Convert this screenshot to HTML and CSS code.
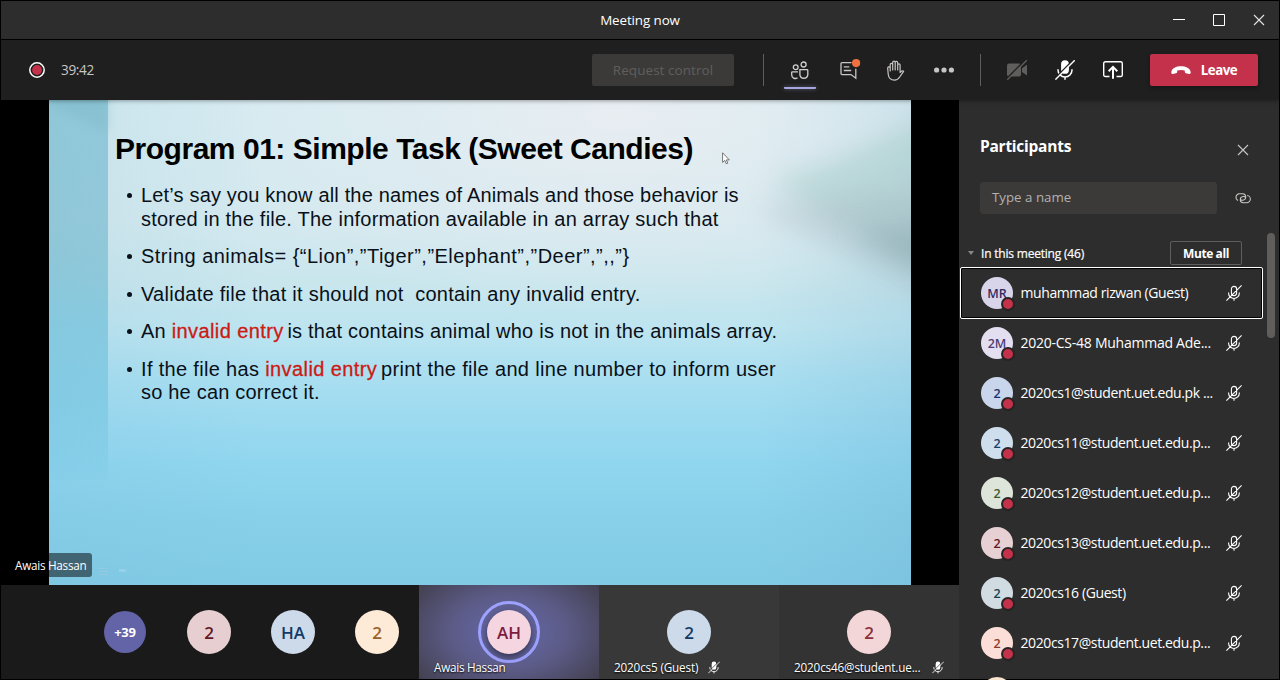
FILE: index.html
```html
<!DOCTYPE html>
<html lang="en">
<head>
<meta charset="utf-8">
<title>Meeting now</title>
<link rel="stylesheet" href="styles.css">
</head>
<body>
<svg class="defs" width="0" height="0" aria-hidden="true">
  <symbol id="mic-off" viewBox="0 0 16 16">
    <path d="M5.400 4a2.600 2.600 0 0 1 5.200 0v4a2.600 2.600 0 0 1-5.200 0zM2.600 7.600v.6a5.300 5.300 0 0 0 10.700 0v-.6M8 13.600v2.200M.4 15.600L15.600.4" fill="none" stroke="currentColor" stroke-width="1.1"/>
  </symbol>
  <symbol id="mic-solid" viewBox="0 0 20 20">
    <path d="M6.100 4.100a3.900 3.900 0 0 1 7.800 0v5.800a3.900 3.900 0 0 1-7.800 0z" fill="currentColor"/>
    <path d="M3 9.200v.8a7 7 0 0 0 14 0v-.8M10 17v2.800" fill="none" stroke="currentColor" stroke-width="1.5"/>
    <path d="M-.4 18.600L18.600-.4" stroke="var(--cut)" stroke-width="1.5"/>
    <path d="M.4 19.600L19.800.2" stroke="currentColor" stroke-width="1.4"/>
  </symbol>
</svg>
<div class="window">
  <header class="titlebar">
    <span class="title">Meeting now</span>
    <div class="controls">
      <svg width="12" height="12"><path d="M0 5.500h12" stroke="#fff"/></svg>
      <svg width="12" height="12"><path d="M.5.5h11v11H.5z" fill="none" stroke="#fff"/></svg>
      <svg width="12" height="12"><path d="M1 1l10 10M11 1L1 11" stroke="#e4e4e4" stroke-width="1.1"/></svg>
    </div>
  </header>
  <nav class="toolbar">
    <svg class="rec" width="16" height="16"><circle cx="8" cy="8" r="7.2" fill="none" stroke="#fff" stroke-width="1.5"/><circle cx="8" cy="8" r="4.9" fill="#c4314b"/></svg>
    <span class="timer">39:42</span>
    <button class="request">Request control</button>
    <i class="divider"></i>
    <span class="tool people active"><svg width="18" height="19" viewBox="0 0 18 19" fill="none" stroke="#d2d0ce" stroke-width="1.3"><circle cx="4.700" cy="6.200" r="2.4"/><circle cx="12.600" cy="3.500" r="2.5"/><path d="M8.900 8.600h7.200c.4 0 .7.3.7.7v4.600a4 4 0 0 1-7.900 0zM6.900 10.800H1.400c-.4 0-.7.3-.7.7v2.200a3.600 3.600 0 0 0 5.800 3"/></svg></span>
    <span class="tool chat"><svg width="20" height="20" viewBox="0 0 20 20" fill="none" stroke="#c8c6c4" stroke-width="1.3"><path d="M12.500 2.600H3c-.6 0-1 .4-1 1v10c0 .6.4 1 1 1h9l4.800 3.600V8.700M4.800 6.800h5.500M4.800 10.500h7.400"/><circle cx="17.100" cy="3.100" r="4.100" fill="#f07040" stroke="none"/></svg></span>
    <span class="tool hand"><svg width="18" height="21" viewBox="0 0 18 21" fill="none" stroke="#c8c6c4" stroke-width="1.2" stroke-linejoin="round" stroke-linecap="round"><path d="M4.200 11V4.600a1.250 1.250 0 0 1 2.500 0V10M6.700 4.600V2.300a1.250 1.250 0 0 1 2.500 0V10M9.200 2.700a1.250 1.250 0 0 1 2.500 0V10M11.700 5a1.200 1.200 0 0 1 2.400 0v7.500l1.600-1.400c.7-.5 1.500-.4 1.900.2L13.700 17c-1.300 2-2.700 3.200-5.200 3.200-3.700 0-5.900-2.500-6.300-5.900L1.700 8.400a1.250 1.250 0 0 1 2.500-.4"/></svg></span>
    <span class="tool more"><svg width="20" height="6" fill="#c8c6c4"><circle cx="2.600" cy="3" r="2.6"/><circle cx="10" cy="3" r="2.6"/><circle cx="17.400" cy="3" r="2.6"/></svg></span>
    <i class="divider second"></i>
    <span class="tool cam"><svg width="20" height="20" viewBox="0 0 20 20"><rect y="3.600" width="14" height="13" rx="2" fill="#605e5c"/><path d="M15 8.200l5-3.400v10.600l-5-3.400z" fill="#605e5c"/><path d="M0 18.600L18.600 0" stroke="#1f1f1f" stroke-width="2"/><path d="M.3 19.700L19.800.2" stroke="#605e5c" stroke-width="1.3"/></svg></span>
    <span class="tool mic"><svg width="20" height="20"><use href="#mic-solid"/></svg></span>
    <span class="tool share"><svg width="20" height="18" viewBox="0 0 20 18" fill="none" stroke="#fff" stroke-width="1.4"><path d="M6.500 15.500H2.400c-1 0-1.700-.6-1.700-1.600V2.400C.7 1.400 1.400.7 2.400.7h15.200c1 0 1.700.7 1.700 1.700v11.500c0 1-.7 1.600-1.700 1.600h-4.100"/><path d="M10 17.700V6.200M5.700 10.200L10 5.900l4.300 4.300" stroke-width="2"/></svg></span>
    <button class="leave"><svg width="20" height="9" viewBox="0 0 20 9"><path d="M.3 6.200C.7 2.100 5.400.2 10 .2s9.300 1.900 9.700 6c.1 1.300-.6 1.900-1.700 1.700l-3-.6c-.8-.2-1.200-.7-1.200-1.500V4.500c-2.500-.8-5.100-.8-7.600 0v1.300c0 .8-.4 1.300-1.200 1.500l-3 .6c-1.100.2-1.800-.4-1.700-1.700z" fill="#fff"/></svg><span>Leave</span></button>
  </nav>
  <main class="main">
    <section class="stage">
      <div class="share-area">
        <article class="slide">
          <svg class="scenery" width="862" height="485" viewBox="0 0 862 485">
            <filter id="soft" x="-50%" y="-50%" width="200%" height="200%"><feGaussianBlur stdDeviation="13"/></filter>
            <filter id="haze" x="-50%" y="-50%" width="200%" height="200%"><feGaussianBlur stdDeviation="5"/></filter>
            <path d="M720 82L790 58 835 38 900 5V180L800 130z" fill="#a3cac6" opacity=".5" filter="url(#soft)"/>
            <path d="M700 108L900 85V205L780 145z" fill="#a3b6bf" opacity=".35" filter="url(#soft)"/>
            <path d="M800 132L900 125V185L860 165z" fill="#88a7ad" opacity=".5" filter="url(#soft)"/>
            <path d="M0 6L59 32V-20H0z" fill="#7db8c6" opacity=".4" filter="url(#haze)"/>
          </svg>
          <div class="slide-text">
            <h1>Program 01: Simple Task (Sweet Candies)</h1>
            <ul>
              <li><span class="l1">Let’s say you know all the names of Animals and those behavior is</span><br><span class="l2">stored in the file. The information available in an array such that</span></li>
              <li><span class="l3">String animals= {“Lion”,”Tiger”,”Elephant”,”Deer”,”,,”}</span></li>
              <li><span class="l4">Validate file that it should not &nbsp;contain any invalid entry.</span></li>
              <li><span class="l5">An <em>invalid entry</em> is that contains animal who is not in the animals array.</span></li>
              <li><span class="l6">If the file has <em>invalid entry</em> print the file and line number to inform user</span><br><span class="l7">so he can correct it.</span></li>
            </ul>
          </div>
          <svg class="pointer" width="9" height="13" viewBox="0 0 9 13"><path d="M.6.8v9.600l2.200-2 1.500 3.400 1.500-.7-1.500-3.200h3z" fill="#fff" stroke="#555" stroke-width=".8"/></svg>
          <svg class="ghost" width="32" height="10"><path d="M1 1.500h9M1 4.500h9M1 7.500h9" stroke="#a0cbe0" opacity=".6"/><rect x="21" y="2" width="7" height="3" fill="#a5d4e9" opacity=".6"/></svg>
        </article>
        <div class="presenter">Awais Hassan</div>
      </div>
      <div class="strip">
        <div class="overflow">
          <span class="av plus">+39</span><span class="av rose">2</span><span class="av blue">HA</span><span class="av cream">2</span>
        </div>
        <div class="tile speaking"><span class="ring"><span class="av pink">AH</span></span><p><span>Awais Hassan</span></p></div>
        <div class="tile t2"><span class="av blue">2</span><p><span class="n2">2020cs5 (Guest)</span><svg width="12" height="13"><use href="#mic-solid"/></svg></p></div>
        <div class="tile t3"><span class="av salmon">2</span><p><span class="n3">2020cs46@student.ue...</span><svg width="12" height="13"><use href="#mic-solid"/></svg></p></div>
      </div>
    </section>
    <aside class="panel">
      <div class="panel-head"><h2>Participants</h2><svg width="12" height="12"><path d="M1 1l10 10M11 1L1 11" stroke="#c8c6c4" stroke-width="1.1"/></svg></div>
      <div class="search"><div class="field">Type a name</div><svg width="16" height="11" viewBox="0 0 17 12" fill="none" stroke="#c8c6c4" stroke-width="1.15"><path d="M3 8.100A3.800 3.800 0 0 1 4.400.9h3.800c1.900.2 3.300 1.600 3.300 3.500s-1.400 3.300-3.200 3.500H7.500c-.8 0-1.500-.5-1.800-1.200M13 2.700a3.900 3.900 0 0 1-.9 7.900H8.700c-1.900-.2-3.200-1.500-3.200-3.300s1.400-3.300 3.200-3.500h.8c.8 0 1.400.5 1.700 1.200"/></svg></div>
      <div class="group"><i class="caret"></i><span>In this meeting (46)</span><button>Mute all</button></div>
      <ul class="people-list">
        <li class="selected"><span class="who lilac">MR</span><span class="name">muhammad rizwan (Guest)</span><svg width="16" height="16"><use href="#mic-off"/></svg></li>
        <li><span class="who mauve">2M</span><span class="name wide">2020-CS-48 Muhammad Ade...</span><svg width="16" height="16"><use href="#mic-off"/></svg></li>
        <li><span class="who peri">2</span><span class="name">2020cs1@student.uet.edu.pk ...</span><svg width="16" height="16"><use href="#mic-off"/></svg></li>
        <li><span class="who sky">2</span><span class="name">2020cs11@student.uet.edu.p...</span><svg width="16" height="16"><use href="#mic-off"/></svg></li>
        <li><span class="who green">2</span><span class="name">2020cs12@student.uet.edu.p...</span><svg width="16" height="16"><use href="#mic-off"/></svg></li>
        <li><span class="who rosy">2</span><span class="name">2020cs13@student.uet.edu.p...</span><svg width="16" height="16"><use href="#mic-off"/></svg></li>
        <li><span class="who steel">2</span><span class="name">2020cs16 (Guest)</span><svg width="16" height="16"><use href="#mic-off"/></svg></li>
        <li><span class="who coral">2</span><span class="name">2020cs17@student.uet.edu.p...</span><svg width="16" height="16"><use href="#mic-off"/></svg></li>
        <li><span class="who peach"></span></li>
      </ul>
      <i class="thumb"></i>
    </aside>
  </main>
</div>
</body>
</html>
```
FILE: styles.css
```css
*, *::before, *::after { box-sizing: border-box; }
body { margin: 0; background: #000; font-family: "Open Sans", "Noto Sans", sans-serif; color: #fff; }
.defs { position: absolute; }
svg { display: block; flex: none; overflow: visible; }
h1, h2, p, ul { margin: 0; padding: 0; }
ul { list-style: none; }
button { font: inherit; color: inherit; border: 0; padding: 0; }
.window { width: 1280px; height: 680px; padding: 1px; overflow: hidden; display: flex; flex-direction: column; }

.titlebar { height: 38px; flex: none; background: #2d2d2d; display: flex; align-items: center; justify-content: center; position: relative; }
.title { font-size: 13.4px; letter-spacing: -.1px; padding-bottom: 1px; }
.controls { position: absolute; right: 14px; top: 13px; display: flex; gap: 28px; }

.toolbar { height: 60px; flex: none; margin-top: 1px; background: #1f1f1f; display: flex; align-items: center; box-shadow: 0 1px 4px rgba(0,0,0,.35); position: relative; z-index: 2; --cut: #1f1f1f; }
.rec { margin-left: 28px; }
.timer { width: 60px; margin-left: 16px; padding-bottom: 1px; font-size: 13.6px; letter-spacing: -.35px; color: #c8c6c4; }
.request { width: 142px; height: 32px; margin-left: 471px; border-radius: 2px; background: #3b3a39; color: #605e5c; font-size: 13.5px; letter-spacing: .05px; }
.divider { width: 1px; height: 32px; background: #605e5c; margin-left: 29px; }
.tool { display: flex; justify-content: center; width: 32px; }
.people { margin-left: 20px; height: 36px; align-items: center; }
.active { border-bottom: 2px solid #a6a7dc; margin-top: 2px; position: relative; border-radius: 1px; }
.active::after { content: ""; position: absolute; left: 0; right: 0; bottom: -2px; height: 2px; box-shadow: 0 0 4px rgba(150,140,210,.6); }
.chat { margin-left: 17px; }
.hand { margin-left: 14px; }
.more { margin-left: 17px; }
.second { margin-left: 20px; }
.cam { margin-left: 20px; }
.mic, .share { margin-left: 16px; }
.leave { width: 108px; height: 32px; margin-left: 21px; background: #c4314b; border-radius: 2px; display: flex; align-items: center; justify-content: center; gap: 10px; font-size: 13.3px; font-weight: 700; letter-spacing: -.5px; box-shadow: 0 2px 4px rgba(0,0,0,.3); }

.main { flex: 1; min-height: 0; display: flex; }
.stage { width: 958px; flex: none; display: flex; flex-direction: column; }
.share-area { height: 485px; position: relative; padding-left: 48px; background: #000; }
.slide { width: 862px; height: 485px; position: relative; overflow: hidden;
  background:
    linear-gradient(rgba(64,160,190,.42), rgba(64,160,190,.4) 40%, rgba(64,170,205,.4) 60%, rgba(64,170,205,.26) 80%, rgba(70,170,205,.04)) 0 0 / 59px 380px no-repeat,
    radial-gradient(ellipse 420px 200px at 570px 15px, rgba(238,238,242,.75), rgba(236,238,242,.4) 45%, transparent),
    linear-gradient(90deg, rgba(110,175,205,.13), transparent 25%, transparent 82%, rgba(90,150,185,.14)),
    linear-gradient(#d6ebf1 0, #d4e9ef 25%, #c9e6ed 38%, #bce4f0 48%, #abdff0 56%, #9cdaf0 66%, #90d6ef 75%, #88d0ea 86%, #82cbe5 100%); }
.scenery { position: absolute; left: 0; top: 0; }
.slide-text { position: relative; padding: 32px 0 0 66px; font-family: "Liberation Sans", sans-serif; color: #091019; white-space: nowrap; }
h1 { font-size: 30px; line-height: 34px; color: #000; letter-spacing: -.47px; }
.slide li { position: relative; padding-left: 26px; font-size: 20px; line-height: 23.5px; margin-bottom: 14px; }
.slide ul { padding-top: 18px; }
.slide li::before { content: ""; position: absolute; left: 12px; top: 9px; width: 5px; height: 5px; border-radius: 50%; background: #091019; }
.slide em { font-style: normal; color: #cc1a14; letter-spacing: .4px; margin-right: -2px; -webkit-text-stroke: .3px #cc1a14; }
.l1 { letter-spacing: .17px; }
.l2 { letter-spacing: .23px; }
.l3 { letter-spacing: .48px; }
.l4 { letter-spacing: .26px; }
.l5 { letter-spacing: .22px; }
.l6 { letter-spacing: .33px; }
.l7 { letter-spacing: .2px; }
.pointer { position: absolute; left: 673px; top: 52px; }
.ghost { position: absolute; left: 49px; top: 467px; }
.presenter { position: absolute; left: 0; top: 453px; width: 91px; height: 24px; padding-left: 14px; border-radius: 0 3px 3px 0; background: rgba(0,0,0,.5); font-size: 11.7px; line-height: 25px; letter-spacing: -.25px; }

.strip { height: 94px; display: flex; }
.overflow { width: 418px; background: #1a1a1a; display: flex; align-items: center; justify-content: flex-end; gap: 40px; padding-right: 20px; }
.av { width: 44px; height: 44px; border-radius: 50%; display: flex; align-items: center; justify-content: center; font-size: 17px; font-weight: 600; flex: none; }
.plus { width: 42px; height: 42px; margin-right: 1px; background: #6264a7; font-size: 13px; font-weight: 700; letter-spacing: -.2px; }
.rose { background: #e7ced1; color: #641724; }
.blue { background: #cddaea; color: #123a68; }
.cream { background: #fdebd7; color: #99602a; }
.pink { background: #f5d5e0; color: #7b1d40; }
.salmon { background: #f3d7d8; color: #8c3039; }
.tile { width: 180px; position: relative; display: flex; justify-content: center; align-items: center; background: #383838; --cut: #383838; }
.t3 { background: #333; --cut: #333; }
.speaking { background: radial-gradient(ellipse 115px 75px at 50% 50%, #6264a0 15%, #5c5b87 50%, #42404f 100%); }
.ring { width: 62px; height: 62px; border: 3.5px solid #9ea2ff; border-radius: 50%; display: flex; align-items: center; justify-content: center; }
.ring .av { box-shadow: 0 3px 6px rgba(0,0,0,.45); }
.tile p { position: absolute; left: 15px; bottom: 3px; display: flex; align-items: center; gap: 10px; font-size: 11.7px; line-height: 18px; letter-spacing: -.25px; text-shadow: 0 1px 2px #000; white-space: nowrap; }
.n2, .n3 { letter-spacing: -.15px; }
.t3 p { gap: 12px; }

.panel { flex: 1; background: #2d2d2d; position: relative; }
.panel-head { padding: 35px 30px 0 21px; height: 82px; display: flex; justify-content: space-between; }
h2 { font-size: 15.5px; line-height: 23px; font-weight: 700; letter-spacing: -.25px; }
.panel-head svg { margin-top: 9px; }
.search { height: 32px; padding-left: 21px; display: flex; align-items: center; gap: 18px; }
.field { width: 237px; height: 32px; border-radius: 3px; background: #3b3a39; color: #b3b0ad; font-size: 13.3px; line-height: 31px; padding-left: 12px; }
.group { display: flex; align-items: center; margin-top: 27px; height: 24px; padding-left: 9px; font-size: 12px; }
.group span { width: 189px; margin-left: 7px; letter-spacing: -.2px; -webkit-text-stroke: .2px #fff; }
.caret { border: 3.5px solid transparent; border-top: 4px solid #8a8886; border-bottom: 0; }
.group button { width: 72px; height: 24px; border: 1px solid #605e5c; border-radius: 2px; background: none; font-weight: 700; letter-spacing: -.4px; }
.people-list { height: 414px; overflow: hidden; margin-top: 1px; padding: 2px 0 0 1px; }
.people-list li { width: 303px; height: 50px; padding: 0 21px; display: flex; align-items: center; }
.people-list .selected { height: 52px; margin: -1px 0; border: 1px solid #fff; border-radius: 2px; box-shadow: inset 0 0 0 1px #000; padding: 0 20px; }
.who { position: relative; width: 32px; height: 32px; flex: none; border-radius: 50%; font-size: 12.5px; font-weight: 600; display: flex; align-items: center; justify-content: center; }
.who::after { content: ""; position: absolute; right: -2px; bottom: -2px; width: 14px; height: 14px; border-radius: 50%; border: 2px solid #252423; background: #c4314b; }
.name { flex: 1; margin-left: 7.5px; padding-bottom: 1px; font-size: 14px; letter-spacing: -.4px; white-space: nowrap; }
.wide { letter-spacing: -.25px; }
.lilac { background: #d8d5ea; color: #332b66; }
.mauve { background: #e4dff0; color: #4c3f75; }
.peri { background: #c9d5ea; color: #17336f; }
.sky { background: #cfdeec; color: #173d69; }
.green { background: #dde4d9; color: #3f592c; }
.rosy { background: #e7d0d3; color: #641724; }
.steel { background: #d0dbe2; color: #184052; }
.coral { background: #fbded7; color: #8c3b2c; }
.peach { background: #fbe6d0; }
.thumb { position: absolute; left: 308px; top: 133px; width: 8px; height: 105px; border-radius: 4px; background: #605e5c; }
```
